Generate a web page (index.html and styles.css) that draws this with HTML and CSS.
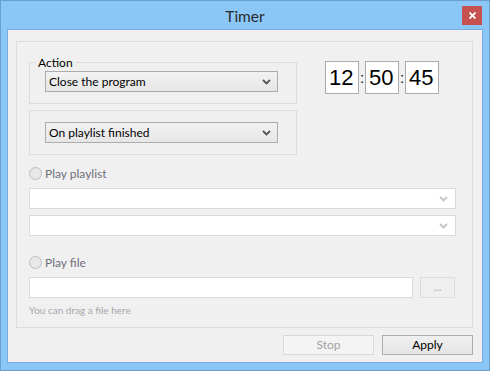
FILE: index.html
```html
<!DOCTYPE html>
<html>
<head>
<meta charset="utf-8">
<link rel="stylesheet" href="styles.css">
</head>
<body>
<div class="window">
  <div class="titlebar">
    <span class="title">Timer</span>
    <span class="close"><svg width="7" height="7" viewBox="0 0 7 7"><path d="M0.5 0.5L6.5 6.5M6.5 0.5L0.5 6.5" stroke="#fff" stroke-width="1.8"/></svg></span>
  </div>
  <div class="client">
    <div class="group">
      <div class="top-row">
        <div class="actions">
          <div class="box box-action">
            <span class="legend">Action</span>
            <div class="combo"><span>Close the program</span><svg class="chev" width="9" height="6" viewBox="0 0 9 6"><path d="M1 1L4.5 4.5L8 1" fill="none" stroke="#555" stroke-width="1.8"/></svg></div>
          </div>
          <div class="box box-when">
            <div class="combo"><span>On playlist finished</span><svg class="chev" width="9" height="6" viewBox="0 0 9 6"><path d="M1 1L4.5 4.5L8 1" fill="none" stroke="#555" stroke-width="1.8"/></svg></div>
          </div>
        </div>
        <div class="timer">
          <span class="digit">12</span><span class="colon">:</span><span class="digit">50</span><span class="colon">:</span><span class="digit">45</span>
        </div>
      </div>
      <div class="radio radio-playlist"><span class="dot"></span><span>Play playlist</span></div>
      <div class="select"><svg class="chev" width="9" height="6" viewBox="0 0 9 6"><path d="M1 1L4.5 4.5L8 1" fill="none" stroke="#c4c4c4" stroke-width="1.8"/></svg></div>
      <div class="select select-2"><svg class="chev" width="9" height="6" viewBox="0 0 9 6"><path d="M1 1L4.5 4.5L8 1" fill="none" stroke="#c4c4c4" stroke-width="1.8"/></svg></div>
      <div class="radio radio-file"><span class="dot"></span><span>Play file</span></div>
      <div class="file-row">
        <div class="input"></div>
        <div class="browse">...</div>
      </div>
      <div class="hint">You can drag a file here</div>
    </div>
    <div class="buttons">
      <div class="btn btn-disabled">Stop</div>
      <div class="btn">Apply</div>
    </div>
  </div>
</div>
</body>
</html>
```
FILE: styles.css
```css
* { box-sizing: border-box; }
html, body { margin: 0; padding: 0; }
body {
  width: 490px;
  height: 371px;
  overflow: hidden;
  font-family: "Lato", "Open Sans", sans-serif;
  font-size: 12px;
  color: #000;
}
.window {
  width: 490px;
  height: 371px;
  background: #8ac7f7;
  border: 1px solid #6c9ed0;
  padding: 0 6px 7px 6px;
  display: flex;
  flex-direction: column;
}
.titlebar {
  height: 28px;
  display: grid;
  grid-template-columns: 1fr auto 1fr;
  align-items: start;
  margin: 0 -6px;
}
.title {
  grid-column: 2;
  font-family: "Lato", sans-serif;
  font-size: 15.5px;
  line-height: 20px;
  margin-top: 5px;
  color: #2b2b2b;
}
.close {
  grid-column: 3;
  justify-self: end;
  width: 20px;
  height: 19px;
  margin-top: 5px;
  margin-right: 7px;
  background: #c75050;
  display: flex;
  align-items: center;
  justify-content: center;
}
.client {
  flex: 1;
  background: #f0f0f0;
  border: 1px solid #78ade0;
  display: flex;
  flex-direction: column;
}
.group {
  margin: 11px 9px 0 8px;
  height: 287px;
  border: 1px solid #dcdcdc;
  padding: 0 15px 0 12px;
  display: flex;
  flex-direction: column;
}
.top-row {
  display: flex;
  align-items: flex-start;
}
.actions {
  margin-top: 20px;
  width: 268px;
  display: flex;
  flex-direction: column;
}
.box {
  position: relative;
  border: 1px solid #dcdcdc;
  padding-left: 15px;
}
.box-action { height: 42px; padding-top: 8px; }
.box-when { height: 45px; padding-top: 11px; margin-top: 6px; }
.legend {
  position: absolute;
  top: -8px;
  left: 6px;
  padding: 0 2px;
  background: #f0f0f0;
  line-height: 15px;
}
.combo {
  width: 233px;
  height: 21px;
  border: 1px solid #acacac;
  background: linear-gradient(#f2f2f2, #e6e6e6);
  display: flex;
  align-items: center;
  justify-content: space-between;
  padding: 0 6px 0 3px;
  line-height: 19px;
}
.chev { display: block; }
.timer {
  margin-top: 18px;
  margin-left: 28px;
  display: flex;
  align-items: center;
}
.digit {
  width: 34px;
  height: 33px;
  background: #fff;
  border: 1px solid #ababab;
  font-family: "Liberation Sans", sans-serif;
  font-size: 22px;
  line-height: 31px;
  padding-left: 3px;
}
.colon {
  width: 6px;
  text-align: center;
  font-family: "Liberation Sans", sans-serif;
  font-size: 15px;
  line-height: 33px;
  padding-top: 1px;
}
.radio {
  display: flex;
  align-items: center;
  gap: 3px;
  height: 13px;
  color: #6f6f7a;
}
.radio-playlist { margin-top: 12px; }
.radio-file { margin-top: 20px; }
.dot {
  width: 13px;
  height: 13px;
  border-radius: 50%;
  border: 1px solid #bcbcbc;
  background: #e8e8e8;
  flex: none;
}
.select {
  margin-top: 8px;
  width: 427px;
  height: 21px;
  border: 1px solid #d9d9d9;
  background: #fff;
  display: flex;
  align-items: center;
  justify-content: flex-end;
  padding-right: 7px;
}
.select-2 { margin-top: 6px; }
.file-row {
  margin-top: 8px;
  display: flex;
  gap: 7px;
}
.input {
  width: 384px;
  height: 21px;
  border: 1px solid #d9d9d9;
  background: #fff;
}
.browse {
  width: 35px;
  height: 21px;
  border: 1px solid #dcdcdc;
  background: #efefef;
  color: #a8a8a8;
  text-align: center;
  line-height: 17px;
  font-size: 11px;
}
.hint {
  margin-top: 6px;
  font-size: 10px;
  line-height: 12px;
  color: #a7a7ad;
}
.buttons {
  margin: 7px 9px 0 0;
  display: flex;
  justify-content: flex-end;
  gap: 8px;
}
.btn {
  width: 91px;
  height: 20px;
  border: 1px solid #adadad;
  background: linear-gradient(#f0f0f0, #e5e5e5);
  text-align: center;
  line-height: 18px;
}
.btn-disabled {
  border-color: #d9d9d9;
  background: #f4f4f4;
  color: #a3a3a3;
}
```
